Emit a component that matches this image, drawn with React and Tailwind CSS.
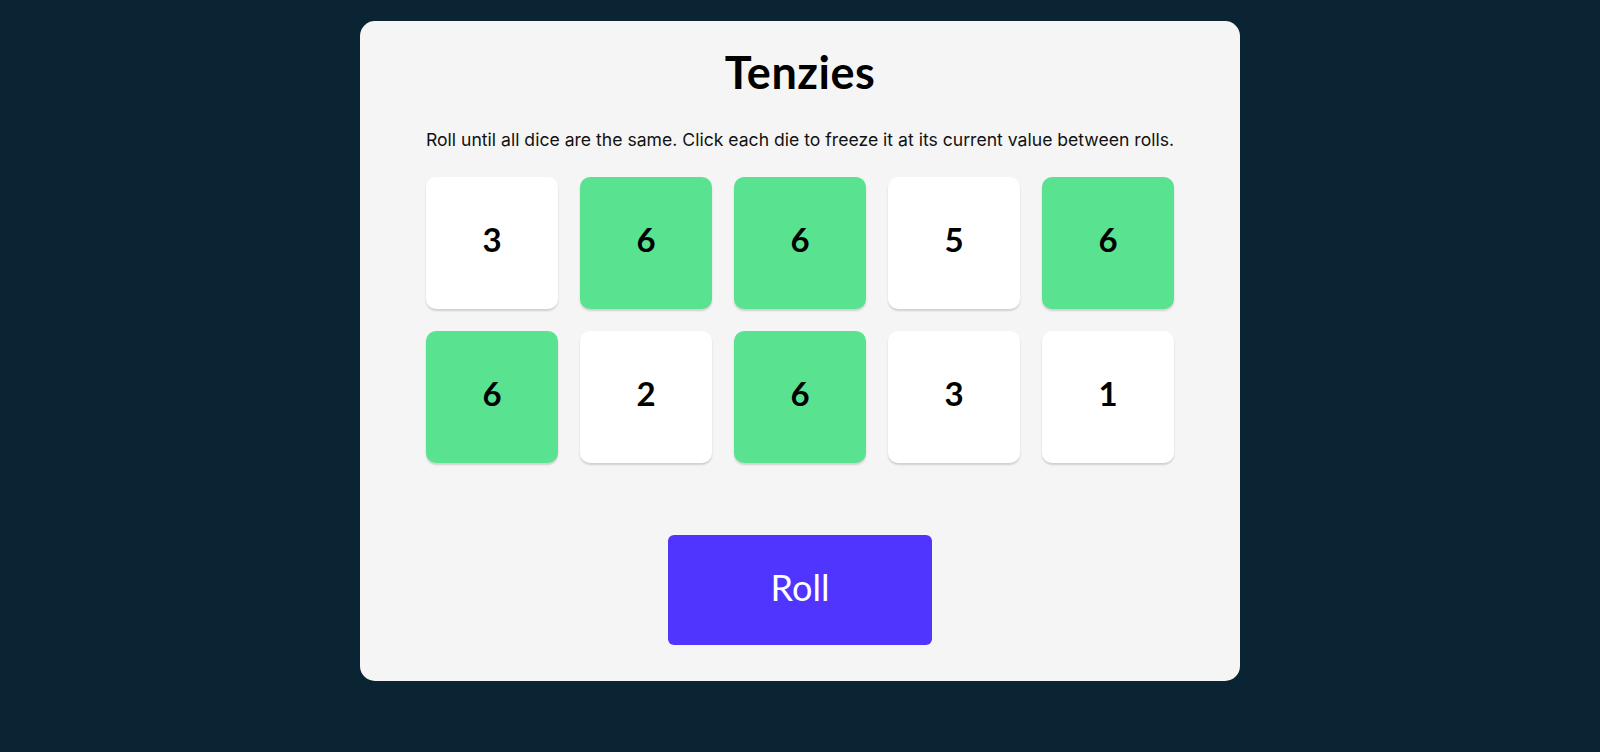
import React, { useState } from "react";

const startDice = [
  { value: 3, held: false },
  { value: 6, held: true },
  { value: 6, held: true },
  { value: 5, held: false },
  { value: 6, held: true },
  { value: 6, held: true },
  { value: 2, held: false },
  { value: 6, held: true },
  { value: 3, held: false },
  { value: 1, held: false },
];

const Die = ({ value, held, onClick }) => (
  <button
    onClick={onClick}
    className={`w-[132px] h-[132px] rounded-[10px] flex items-center justify-center pb-[6px] font-['Lato','Noto_Sans',sans-serif] text-[33px] font-bold text-black shadow-[0_2px_2px_rgba(0,0,0,0.15)] ${
      held ? "bg-[#59e391]" : "bg-white"
    }`}
  >
    {value}
  </button>
);

const App = () => {
  const [dice, setDice] = useState(startDice);

  const hold = (i) =>
    setDice((d) => d.map((x, j) => (j === i ? { ...x, held: !x.held } : x)));

  const roll = () =>
    setDice((d) =>
      d.map((x) =>
        x.held ? x : { ...x, value: Math.ceil(Math.random() * 6) }
      )
    );

  return (
    <div className="min-h-screen bg-[#0b2434] pt-[21px] flex justify-center">
      <main className="w-[880px] h-[660px] bg-[#f5f5f5] rounded-[15px] flex flex-col items-center pt-[28px]">
        {/* Title */}
        <h1 className="font-['Lato','Noto_Sans',sans-serif] text-[45px] leading-[46px] font-bold text-black tracking-[0.5px]">
          Tenzies
        </h1>

        {/* Instructions */}
        <p className="mt-[33px] font-['Inter','Noto_Sans',sans-serif] text-[17.6px] leading-[24px] text-[#111111] text-center">
          Roll until all dice are the same. Click each die to freeze it at its
          current value between rolls.
        </p>

        {/* Dice */}
        <div className="mt-[25px] grid grid-cols-5 gap-[22px]">
          {dice.map((d, i) => (
            <Die key={i} value={d.value} held={d.held} onClick={() => hold(i)} />
          ))}
        </div>

        {/* Roll */}
        <button
          onClick={roll}
          className="mt-[72px] w-[264px] h-[110px] bg-[#5035ff] rounded-[6px] pb-[6px] font-['Lato','Noto_Sans',sans-serif] text-white text-[36px] flex items-center justify-center"
        >
          Roll
        </button>
      </main>
    </div>
  );
};

export default App;
